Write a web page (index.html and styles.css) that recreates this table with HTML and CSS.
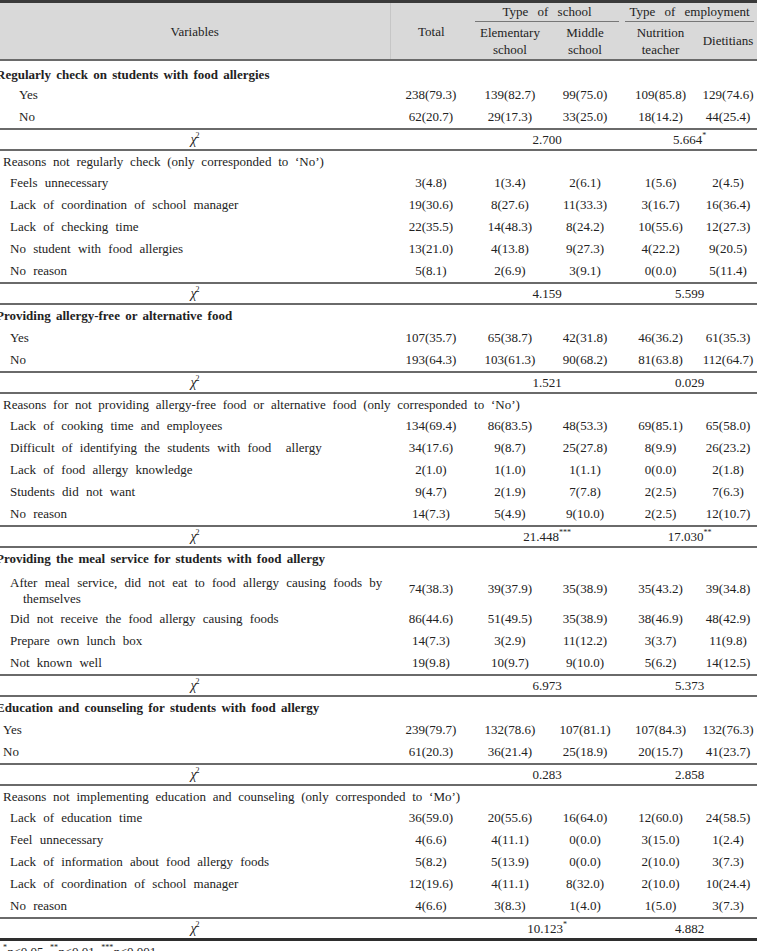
FILE: index.html
```html
<!DOCTYPE html>
<html lang="en">
<head>
    <meta charset="UTF-8">
    <title>Food allergy management</title>
    <link rel="stylesheet" href="styles.css">
</head>
<body>
    <table class="data-table">
        <colgroup>
            <col class="c-var">
            <col class="c-total">
            <col class="c-elem">
            <col class="c-mid">
            <col class="c-nutri">
            <col class="c-diet">
        </colgroup>
        <thead>
            <tr class="head-top">
                <th rowspan="2" class="var-head">Variables</th>
                <th rowspan="2" class="total-head">Total</th>
                <th colspan="2" class="group"><div class="group-line">Type of school</div></th>
                <th colspan="2" class="group"><div class="group-line">Type of employment</div></th>
            </tr>
            <tr class="head-sub">
                <th>Elementary<br>school</th>
                <th>Middle<br>school</th>
                <th>Nutrition<br>teacher</th>
                <th>Dietitians</th>
            </tr>
        </thead>
        <tbody>
            <tr><td colspan="6" class="sec first-sec">Regularly check on students with food allergies</td></tr>
            <tr><td class="item wide">Yes</td><td>238(79.3)</td><td>139(82.7)</td><td>99(75.0)</td><td>109(85.8)</td><td>129(74.6)</td></tr>
            <tr><td class="item wide">No</td><td>62(20.7)</td><td>29(17.3)</td><td>33(25.0)</td><td>18(14.2)</td><td>44(25.4)</td></tr>
            <tr class="chi"><td class="chi-label"><i>χ</i><sup>2</sup></td><td></td><td colspan="2">2.700</td><td colspan="2">5.664<sup>*</sup></td></tr>

            <tr><td colspan="6" class="reason">Reasons not regularly check (only corresponded to ‘No’)</td></tr>
            <tr><td class="item">Feels unnecessary</td><td>3(4.8)</td><td>1(3.4)</td><td>2(6.1)</td><td>1(5.6)</td><td>2(4.5)</td></tr>
            <tr><td class="item">Lack of coordination of school manager</td><td>19(30.6)</td><td>8(27.6)</td><td>11(33.3)</td><td>3(16.7)</td><td>16(36.4)</td></tr>
            <tr><td class="item">Lack of checking time</td><td>22(35.5)</td><td>14(48.3)</td><td>8(24.2)</td><td>10(55.6)</td><td>12(27.3)</td></tr>
            <tr><td class="item">No student with food allergies</td><td>13(21.0)</td><td>4(13.8)</td><td>9(27.3)</td><td>4(22.2)</td><td>9(20.5)</td></tr>
            <tr><td class="item">No reason</td><td>5(8.1)</td><td>2(6.9)</td><td>3(9.1)</td><td>0(0.0)</td><td>5(11.4)</td></tr>
            <tr class="chi"><td class="chi-label"><i>χ</i><sup>2</sup></td><td></td><td colspan="2">4.159</td><td colspan="2">5.599</td></tr>

            <tr><td colspan="6" class="sec">Providing allergy-free or alternative food</td></tr>
            <tr><td class="item">Yes</td><td>107(35.7)</td><td>65(38.7)</td><td>42(31.8)</td><td>46(36.2)</td><td>61(35.3)</td></tr>
            <tr><td class="item">No</td><td>193(64.3)</td><td>103(61.3)</td><td>90(68.2)</td><td>81(63.8)</td><td>112(64.7)</td></tr>
            <tr class="chi"><td class="chi-label"><i>χ</i><sup>2</sup></td><td></td><td colspan="2">1.521</td><td colspan="2">0.029</td></tr>

            <tr><td colspan="6" class="reason">Reasons for not providing allergy-free food or alternative food (only corresponded to ‘No’)</td></tr>
            <tr><td class="item">Lack of cooking time and employees</td><td>134(69.4)</td><td>86(83.5)</td><td>48(53.3)</td><td>69(85.1)</td><td>65(58.0)</td></tr>
            <tr><td class="item">Difficult of identifying the students with food &nbsp;allergy</td><td>34(17.6)</td><td>9(8.7)</td><td>25(27.8)</td><td>8(9.9)</td><td>26(23.2)</td></tr>
            <tr><td class="item">Lack of food allergy knowledge</td><td>2(1.0)</td><td>1(1.0)</td><td>1(1.1)</td><td>0(0.0)</td><td>2(1.8)</td></tr>
            <tr><td class="item">Students did not want</td><td>9(4.7)</td><td>2(1.9)</td><td>7(7.8)</td><td>2(2.5)</td><td>7(6.3)</td></tr>
            <tr><td class="item">No reason</td><td>14(7.3)</td><td>5(4.9)</td><td>9(10.0)</td><td>2(2.5)</td><td>12(10.7)</td></tr>
            <tr class="chi"><td class="chi-label"><i>χ</i><sup>2</sup></td><td></td><td colspan="2">21.448<sup>***</sup></td><td colspan="2">17.030<sup>**</sup></td></tr>

            <tr><td colspan="6" class="sec">Providing the meal service for students with food allergy</td></tr>
            <tr><td class="item hang">After meal service, did not eat to food allergy causing foods by themselves</td><td>74(38.3)</td><td>39(37.9)</td><td>35(38.9)</td><td>35(43.2)</td><td>39(34.8)</td></tr>
            <tr><td class="item">Did not receive the food allergy causing foods</td><td>86(44.6)</td><td>51(49.5)</td><td>35(38.9)</td><td>38(46.9)</td><td>48(42.9)</td></tr>
            <tr><td class="item">Prepare own lunch box</td><td>14(7.3)</td><td>3(2.9)</td><td>11(12.2)</td><td>3(3.7)</td><td>11(9.8)</td></tr>
            <tr><td class="item">Not known well</td><td>19(9.8)</td><td>10(9.7)</td><td>9(10.0)</td><td>5(6.2)</td><td>14(12.5)</td></tr>
            <tr class="chi"><td class="chi-label"><i>χ</i><sup>2</sup></td><td></td><td colspan="2">6.973</td><td colspan="2">5.373</td></tr>

            <tr><td colspan="6" class="sec">Education and counseling for students with food allergy</td></tr>
            <tr><td class="item narrow">Yes</td><td>239(79.7)</td><td>132(78.6)</td><td>107(81.1)</td><td>107(84.3)</td><td>132(76.3)</td></tr>
            <tr><td class="item narrow">No</td><td>61(20.3)</td><td>36(21.4)</td><td>25(18.9)</td><td>20(15.7)</td><td>41(23.7)</td></tr>
            <tr class="chi"><td class="chi-label"><i>χ</i><sup>2</sup></td><td></td><td colspan="2">0.283</td><td colspan="2">2.858</td></tr>

            <tr><td colspan="6" class="reason">Reasons not implementing education and counseling (only corresponded to ‘Mo’)</td></tr>
            <tr><td class="item">Lack of education time</td><td>36(59.0)</td><td>20(55.6)</td><td>16(64.0)</td><td>12(60.0)</td><td>24(58.5)</td></tr>
            <tr><td class="item">Feel unnecessary</td><td>4(6.6)</td><td>4(11.1)</td><td>0(0.0)</td><td>3(15.0)</td><td>1(2.4)</td></tr>
            <tr><td class="item">Lack of information about food allergy foods</td><td>5(8.2)</td><td>5(13.9)</td><td>0(0.0)</td><td>2(10.0)</td><td>3(7.3)</td></tr>
            <tr><td class="item">Lack of coordination of school manager</td><td>12(19.6)</td><td>4(11.1)</td><td>8(32.0)</td><td>2(10.0)</td><td>10(24.4)</td></tr>
            <tr><td class="item">No reason</td><td>4(6.6)</td><td>3(8.3)</td><td>1(4.0)</td><td>1(5.0)</td><td>3(7.3)</td></tr>
            <tr class="chi last"><td class="chi-label"><i>χ</i><sup>2</sup></td><td></td><td colspan="2">10.123<sup>*</sup></td><td colspan="2">4.882</td></tr>
        </tbody>
    </table>

    <p class="note"><sup>*</sup><i>p</i>&lt;0.05, <sup>**</sup><i>p</i>&lt;0.01, <sup>***</sup><i>p</i>&lt;0.001</p>
</body>
</html>
```

FILE: styles.css
```css
body {
    margin: 0;
    background: #fff;
    color: #222;
    font-family: 'Liberation Serif', 'Times New Roman', serif;
    font-size: 13px;
    overflow: hidden;
}

.data-table {
    width: 757px;
    border-collapse: collapse;
    table-layout: fixed;
    word-spacing: 4px;
}

.c-var { width: 390px; }
.c-total { width: 82px; }
.c-elem { width: 76px; }
.c-mid { width: 74px; }
.c-nutri { width: 77px; }
.c-diet { width: 58px; }

/* header */
thead th {
    background: #d9d9d9;
    font-weight: normal;
    padding: 0;
    line-height: 17px;
    text-align: center;
}

.head-top th {
    border-top: 3px solid #3a3a3a;
}

.head-sub th {
    height: 37px;
    border-bottom: 2px solid #6a6a6a;
    word-spacing: 0;
}

.var-head,
.total-head {
    border-bottom: 2px solid #6a6a6a;
}

.total-head {
    border-left: 1px solid #c6c6c6;
}

.group {
    height: 19px;
    vertical-align: top;
}

.group-line {
    margin: 0 3px;
    border-bottom: 1px solid #777;
    padding-bottom: 1px;
    word-spacing: 6px;
}

/* body rows */
tbody td {
    padding: 0;
    line-height: 22px;
    text-align: center;
    white-space: nowrap;
    vertical-align: middle;
}

tbody td.first-sec {
    line-height: 19px;
    padding-top: 4px;
}

tbody td.sec {
    text-align: left;
    font-weight: bold;
    text-indent: -4px;
    word-spacing: 2px;
}

tbody td.reason {
    text-align: left;
    padding-left: 3px;
    line-height: 21px;
    word-spacing: 3.5px;
}

tbody td.item {
    text-align: left;
    padding-left: 10px;
}

tbody td.item.wide {
    padding-left: 19px;
}

tbody td.item.narrow {
    padding-left: 3px;
}

tbody td.hang {
    white-space: normal;
    line-height: 16px;
    padding: 5px 4px 1px 23px;
    text-indent: -13px;
}

tr.chi td {
    line-height: 19px;
    border-top: 2px solid #6a6a6a;
    border-bottom: 2px solid #6a6a6a;
}

tr.chi.last td {
    border-bottom: 3px solid #2e2e2e;
}

.chi-label i {
    font-size: 14px;
}

sup {
    font-size: 8px;
    line-height: 0;
    vertical-align: 6px;
}

.chi-label sup {
    margin-left: -1px;
}

.note {
    margin: 3px 0 0 3px;
    font-size: 13px;
}
```
